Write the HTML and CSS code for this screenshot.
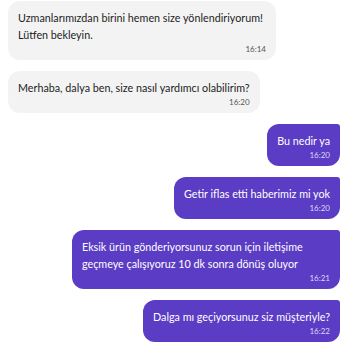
FILE: index.html
```html
<!DOCTYPE html>
<html lang="tr">
<head>
  <meta charset="UTF-8" />
  <meta name="viewport" content="width=device-width, initial-scale=1.0" />
  <title>Sohbet</title>
  <link rel="stylesheet" href="styles.css">
</head>
<body>
  <div class="chat">
    <div class="msg agent">
      <div class="text">Uzmanlarımızdan birini hemen size yönlendiriyorum! Lütfen bekleyin.</div>
      <div class="time">16:14</div>
    </div>
    <div class="msg agent">
      <div class="text">Merhaba, dalya ben, size nasıl yardımcı olabilirim?</div>
      <div class="time">16:20</div>
    </div>
    <div class="msg user">
      <div class="text">Bu nedir ya</div>
      <div class="time">16:20</div>
    </div>
    <div class="msg user">
      <div class="text">Getir iflas etti haberimiz mi yok</div>
      <div class="time">16:20</div>
    </div>
    <div class="msg user">
      <div class="text">Eksik ürün gönderiyorsunuz sorun için iletişime geçmeye çalışıyoruz 10 dk sonra dönüş oluyor</div>
      <div class="time">16:21</div>
    </div>
    <div class="msg user">
      <div class="text">Dalga mı geçiyorsunuz siz müşteriyle?</div>
      <div class="time">16:22</div>
    </div>
  </div>
</body>
</html>
```

FILE: styles.css
```css
body {
  margin: 0;
  padding: 1px 10px 0 8px;
  background: #fff;
  font-family: Lato, Arial, sans-serif;
}
.chat {
  display: flex;
  flex-direction: column;
  gap: 11px;
}
.msg {
  max-width: 248px;
  padding: 8px 10px 5px;
  border-radius: 12px;
}
.msg .text {
  font-size: 10.75px;
  line-height: 17px;
}
.msg .time {
  font-size: 8px;
  line-height: 12px;
  text-align: right;
}
.agent {
  align-self: flex-start;
  background: #f3f3f3;
  color: #1c1c1c;
}
.agent .time {
  color: #555;
}
.user {
  align-self: flex-end;
  background: #5b3cc4;
  color: #fff;
  border-top-right-radius: 3px;
}
.user .time {
  color: #ddd6f5;
}
```
